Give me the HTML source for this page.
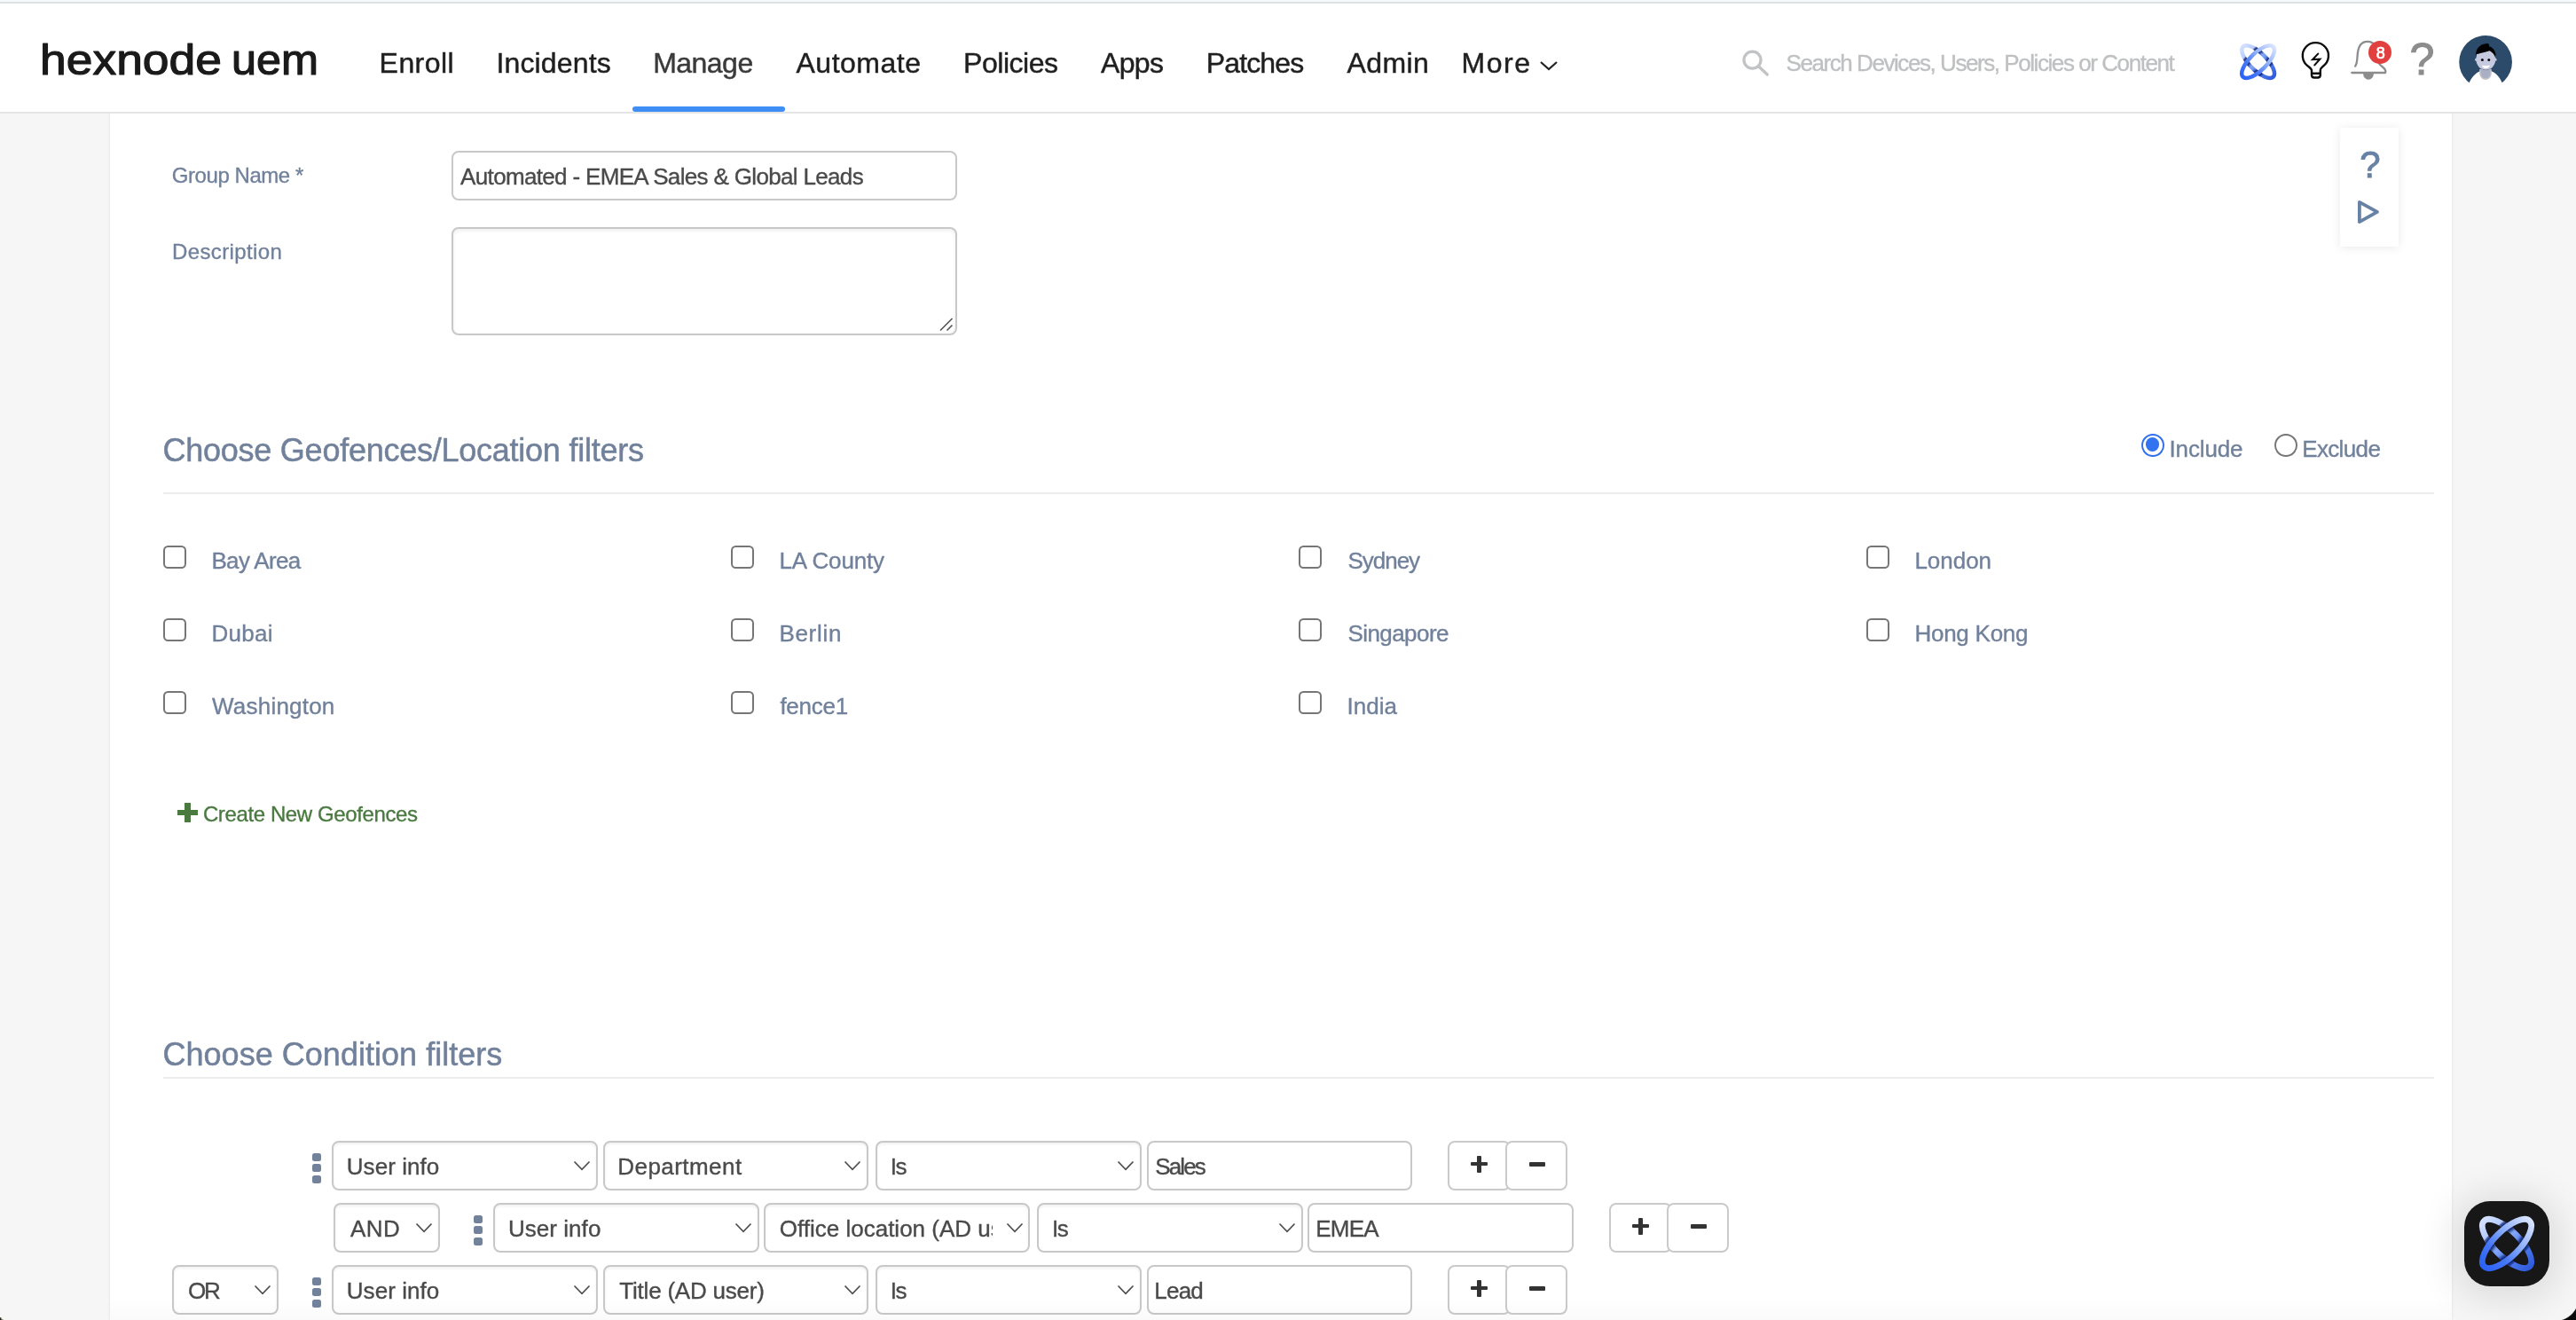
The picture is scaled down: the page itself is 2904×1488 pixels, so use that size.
<!DOCTYPE html><html lang="en"><head><meta charset="utf-8"><title>Hexnode UEM - Dynamic Group</title><style>
*{box-sizing:border-box;margin:0;padding:0}
html,body{width:2904px;height:1488px;overflow:hidden;background:#f6f6f6;font-family:"Liberation Sans",sans-serif}
body{position:relative;opacity:.9999}
div,span,header,nav,section,a,label,h2,button,svg,hr,main,aside{position:absolute;display:block}
.t{white-space:nowrap;line-height:1;font-weight:400;text-decoration:none;-webkit-text-stroke:0.014em}
.fld{background:#fff;border:2px solid #c8c8c8;border-radius:8px}
.sel{background:#fff;border:2px solid #c8c8c8;border-radius:8px;box-shadow:inset 0 2px 3px rgba(0,0,0,.06)}
.btn{background:transparent;border:2px solid #cacaca;border-radius:8px}
.cb{background:#fff;border:2px solid #767676;border-radius:5.5px}
.hr{background:#ececed;height:2px}
@media (max-width:1600px){html{zoom:.5}}
</style></head><body>
<div style="left:0px;top:0px;width:2904px;height:2px;background:#f5f9fa"></div>
<div style="left:0px;top:2px;width:2904px;height:2px;background:#dce1e4"></div>
<header style="left:0;top:4px;width:2904px;height:124px;background:#fff;border-bottom:2px solid #e5e5e5;z-index:2">
<svg style="left:40px;top:30px" width="330" height="64" viewBox="0 0 330 64"><text y="50.200" font-family="Liberation Sans, sans-serif" font-weight="400" font-size="49" fill="#1a1a1a" stroke="#1a1a1a" stroke-width="1.200" stroke-linejoin="round" stroke-linecap="round"><tspan x="5" textLength="205" lengthAdjust="spacingAndGlyphs">hexnode</tspan><tspan> </tspan><tspan x="221" textLength="98" lengthAdjust="spacingAndGlyphs">uem</tspan></text></svg>
<nav style="left:0;top:0;width:1800px;height:122px">
<a class="t" style="left:427.60px;top:50.51px;font-size:32px;color:#1f1f1f;letter-spacing:0.439px;">Enroll</a>
<a class="t" style="left:559.40px;top:50.51px;font-size:32px;color:#1f1f1f;letter-spacing:0.153px;">Incidents</a>
<a class="t" style="left:736.20px;top:50.51px;font-size:32px;color:#3a3a3a;letter-spacing:-0.529px;">Manage</a>
<a class="t" style="left:897.50px;top:50.51px;font-size:32px;color:#1f1f1f;letter-spacing:0.504px;">Automate</a>
<a class="t" style="left:1086.00px;top:50.51px;font-size:32px;color:#1f1f1f;letter-spacing:-0.452px;">Policies</a>
<a class="t" style="left:1241.00px;top:50.51px;font-size:32px;color:#1f1f1f;letter-spacing:-0.646px;">Apps</a>
<a class="t" style="left:1359.70px;top:50.51px;font-size:32px;color:#1f1f1f;letter-spacing:-0.838px;">Patches</a>
<a class="t" style="left:1518.50px;top:50.51px;font-size:32px;color:#1f1f1f;letter-spacing:0.373px;">Admin</a>
<a class="t" style="left:1647.60px;top:50.51px;font-size:32px;color:#1f1f1f;letter-spacing:1.497px;">More</a>
<svg style="left:1734px;top:63px" width="24" height="14" viewBox="0 0 24 14"><polyline points="3,3 12,11 21,3" fill="none" stroke="#222" stroke-width="2.2"/></svg>
<div style="left:713px;top:116px;width:172px;height:6px;background:#3f8ef5;border-radius:3px"></div>
</nav>
<svg style="left:1962px;top:50px" width="36" height="36" viewBox="0 0 36 36"><circle cx="13.5" cy="13.6" r="9.500" fill="none" stroke="#c2c3c4" stroke-width="3.300"/><line x1="20.500" y1="20.800" x2="30.300" y2="30" stroke="#c2c3c4" stroke-width="3.300" stroke-linecap="round"/></svg>
<span class="t" style="left:2013.50px;top:54.39px;font-size:26px;color:#bfc0c2;letter-spacing:-1.436px;">Search Devices, Users, Policies or Content</span>
<svg style="left:2523.29px;top:43.19px" width="45.22" height="45.22" viewBox="-34 -34 68 68">
<defs><linearGradient id="haa" gradientUnits="userSpaceOnUse" x1="-38" y1="0" x2="38" y2="0"><stop offset="0" stop-color="#2b62f5"/><stop offset=".3" stop-color="#4577f6"/><stop offset=".62" stop-color="#8fb0fa"/><stop offset="1" stop-color="#d9e4ff"/></linearGradient>
<linearGradient id="hab" gradientUnits="userSpaceOnUse" x1="-38" y1="0" x2="38" y2="0"><stop offset="0" stop-color="#d3e0ff"/><stop offset=".32" stop-color="#a9c2fc"/><stop offset=".6" stop-color="#5f8af1"/><stop offset="1" stop-color="#2f5bdc"/></linearGradient>
<filter id="haf" x="-20%" y="-20%" width="140%" height="140%"><feGaussianBlur stdDeviation="1.6"/></filter>
<mask id="ham" maskUnits="userSpaceOnUse" x="-34" y="-34" width="68" height="68"><ellipse rx="36.3" ry="14.5" transform="rotate(45)" fill="none" stroke="#fff" stroke-width="6.8"/></mask></defs>
<ellipse rx="36.3" ry="14.5" transform="rotate(45)" fill="none" stroke="url(#hab)" stroke-width="6.8"/>
<g mask="url(#ham)"><ellipse rx="36.3" ry="14.5" transform="rotate(-45)" fill="none" stroke="#0c2273" stroke-opacity=".95" stroke-width="13.5" filter="url(#haf)"/></g>
<ellipse rx="36.3" ry="14.5" transform="rotate(-45)" fill="none" stroke="url(#haa)" stroke-width="6.8"/>
</svg>
<svg style="left:2590px;top:39px" width="42" height="50" viewBox="0 0 42 50"><path d="M16 40 V36.500 C16 34.500 13.500 33 12 31.700 A14.600 14.600 0 1 1 28.800 31.700 C27.300 33 25.800 34.500 25.800 36.500 V40 M16 39.700 H25.800 M16 39.500 V41.500 Q16 44.500 19 44.500 H22.800 Q25.800 44.500 25.800 41.500 V39.500" fill="none" stroke="#0d0d0d" stroke-width="2.400" stroke-linejoin="round"/><polyline points="23.200,17.600 17.100,24.100 25.300,23.600 19.300,30.400" fill="none" stroke="#0d0d0d" stroke-width="2.100" stroke-linejoin="miter" stroke-linecap="round"/></svg>
<svg style="left:2648px;top:40px" width="46" height="48" viewBox="0 0 46 48"><path d="M3.300 38 L41 38 C41.900 36 41 34.500 39.500 32.800 C37 30.500 35.200 29.500 34.300 28 C34 26 34 24 34 22 C34 10 29 2.900 21 2.900 C13.500 2.900 10 9.500 9.600 19 C9.300 25 8.700 28.500 7.200 30.500" fill="none" stroke="#8c8c8c" stroke-width="2.300" stroke-linecap="round" stroke-linejoin="round"/><path d="M16.100 39 A5.900 6.800 0 0 0 27.900 39 Z" fill="#8c8c8c"/></svg>
<div style="left:2670px;top:42px;width:26px;height:26px;background:#e2403f;border-radius:50%"></div>
<span class="t" style="left:2678.70px;top:46.66px;font-size:18px;color:#fff;-webkit-text-stroke:0.7px #fff;">8</span>
<span class="t" style="left:2716.60px;top:37.67px;font-size:50px;color:#8c8c8c;-webkit-text-stroke:1.1px #8c8c8c;">?</span>
<svg style="left:2772px;top:35.700px" width="60" height="62" viewBox="0 0 60 62"><circle cx="30.100" cy="29.900" r="29.850" fill="#2c4a6a"/><path d="M11.600 53.300 C14.500 46.500 19.500 41.500 24.500 40 L36 40 C41 41.500 46 46.500 48.600 53.300 L54 62 L6 62 L11.600 53.300 Z" fill="#fff"/><path d="M23.200 38 L36.800 38 L36.800 42.500 C36.800 47 33.500 50 30 50 C26.500 50 23.200 47 23.200 42.500 Z" fill="#c6c6c8"/><path d="M24.700 38 L35.300 38 L35.300 42.500 C35.300 46 32.800 48.300 30 48.300 C27.200 48.300 24.700 46 24.700 42.500 Z" fill="#a9afc4"/><ellipse cx="30.300" cy="25.600" rx="11.200" ry="13.700" fill="#c6cade"/><circle cx="19.500" cy="27.300" r="1.500" fill="#c6cade"/><circle cx="41.100" cy="27.300" r="1.500" fill="#c6cade"/><path d="M24.500 37.300 Q30.300 41 36 37.300 Q30.300 39.600 24.500 37.300 Z" fill="#3b3f4e" opacity=".55"/><path d="M19.200 26 C18.500 19 20 14.500 23.500 12 C26.500 9.800 29.500 9.200 32.300 9.100 C33.800 9.100 34 10.800 34.200 12.300 C38 13.500 41 17 41.500 21.500 L41.300 25.800 C40.600 23 39.500 20.500 34.800 17.300 C30 18.800 25 20 19.900 21 Z" fill="#000"/><circle cx="26.400" cy="27.500" r="1.500" fill="#0a0a12"/><circle cx="33.800" cy="27.500" r="1.500" fill="#0a0a12"/><path d="M26 33.500 Q30.400 35 34.900 33.500 Q33.500 37.300 30.400 37.300 Q27.300 37.300 26 33.500 Z" fill="#fff"/></svg>
</header>
<main style="left:124px;top:128px;width:2640px;height:1360px;background:#fff;box-shadow:0 0 3px rgba(0,0,0,.10)">
<div style="left:2514px;top:16px;width:66px;height:134px;background:#fff;box-shadow:0 1px 10px rgba(0,0,0,.09)"></div>
<span class="t" style="left:2536.20px;top:37.25px;font-size:42px;color:#6782a5;-webkit-text-stroke:0.9px #6782a5;">?</span>
<svg style="left:2530px;top:93px" width="34" height="36" viewBox="0 0 34 36"><path d="M5.900 6.800 L25.900 17.950 L5.900 29.100 Z" fill="none" stroke="#6782a5" stroke-width="3.800" stroke-linejoin="round"/></svg>
<label class="t" style="left:69.80px;top:57.88px;font-size:24px;color:#71819b;letter-spacing:-0.442px;">Group Name *</label>
<div class="fld" style="left:385px;top:42px;width:570px;height:56px;"></div>
<span class="t" style="left:395.10px;top:57.79px;font-size:26px;color:#4a4a4a;letter-spacing:-0.661px;">Automated - EMEA Sales &amp; Global Leads</span>
<label class="t" style="left:70.00px;top:143.78px;font-size:24px;color:#71819b;letter-spacing:0.380px;">Description</label>
<div class="fld" style="left:385px;top:128px;width:570px;height:122px;box-shadow:inset 0 2px 4px rgba(0,0,0,.07)"><svg style="right:2px;bottom:2px" width="18" height="18" viewBox="0 0 18 18"><path d="M3 16.500 L16.500 3 M10.500 16.500 L16.500 10.500" stroke="#555" stroke-width="1.6" fill="none"/></svg></div>
<h2 class="t" style="left:59.50px;top:361.93px;font-size:36px;color:#71819b;letter-spacing:-0.247px;">Choose Geofences/Location filters</h2>
<div class="hr" style="left:60px;top:427px;width:2560px;height:2px;"></div>
<div style="left:2290px;top:360.5px;width:26px;height:26px;border:2.5px solid #2f6ff0;border-radius:50%;background:#fff"><div style="left:2.75px;top:2.75px;width:15.5px;height:15.5px;border-radius:50%;background:#3273f2"></div></div>
<label class="t" style="left:2321.50px;top:364.99px;font-size:26px;color:#71819b;letter-spacing:-0.130px;">Include</label>
<div style="left:2440px;top:360.5px;width:26px;height:26px;border:2.2px solid #767676;border-radius:50%;background:#fff"></div>
<label class="t" style="left:2471.20px;top:364.99px;font-size:26px;color:#71819b;letter-spacing:-0.640px;">Exclude</label>
<div class="cb" style="left:60px;top:487px;width:26px;height:26px;"></div>
<label class="t" style="left:114.40px;top:490.59px;font-size:26px;color:#71819b;letter-spacing:-0.655px;">Bay Area</label>
<div class="cb" style="left:700px;top:487px;width:26px;height:26px;"></div>
<label class="t" style="left:754.40px;top:490.59px;font-size:26px;color:#71819b;letter-spacing:-0.163px;">LA County</label>
<div class="cb" style="left:1340px;top:487px;width:26px;height:26px;"></div>
<label class="t" style="left:1395.40px;top:490.59px;font-size:26px;color:#71819b;letter-spacing:-1.004px;">Sydney</label>
<div class="cb" style="left:1980px;top:487px;width:26px;height:26px;"></div>
<label class="t" style="left:2034.40px;top:490.59px;font-size:26px;color:#71819b;letter-spacing:-0.020px;">London</label>
<div class="cb" style="left:60px;top:569px;width:26px;height:26px;"></div>
<label class="t" style="left:114.40px;top:572.69px;font-size:26px;color:#71819b;letter-spacing:0.286px;">Dubai</label>
<div class="cb" style="left:700px;top:569px;width:26px;height:26px;"></div>
<label class="t" style="left:754.40px;top:572.69px;font-size:26px;color:#71819b;letter-spacing:0.697px;">Berlin</label>
<div class="cb" style="left:1340px;top:569px;width:26px;height:26px;"></div>
<label class="t" style="left:1395.40px;top:572.69px;font-size:26px;color:#71819b;letter-spacing:-0.560px;">Singapore</label>
<div class="cb" style="left:1980px;top:569px;width:26px;height:26px;"></div>
<label class="t" style="left:2034.40px;top:572.69px;font-size:26px;color:#71819b;letter-spacing:-0.243px;">Hong Kong</label>
<div class="cb" style="left:60px;top:651px;width:26px;height:26px;"></div>
<label class="t" style="left:115.10px;top:654.59px;font-size:26px;color:#71819b;letter-spacing:0.203px;">Washington</label>
<div class="cb" style="left:700px;top:651px;width:26px;height:26px;"></div>
<label class="t" style="left:755.40px;top:654.59px;font-size:26px;color:#71819b;letter-spacing:-0.241px;">fence1</label>
<div class="cb" style="left:1340px;top:651px;width:26px;height:26px;"></div>
<label class="t" style="left:1394.40px;top:654.59px;font-size:26px;color:#71819b;letter-spacing:0.045px;">India</label>
<div style="left:76.19999999999999px;top:784.6px;width:22.6px;height:6.4px;background:#4a7a40"></div>
<div style="left:84.1px;top:777.1px;width:6.6px;height:21.6px;background:#4a7a40"></div>
<a class="t" style="left:104.90px;top:778.08px;font-size:24px;color:#4a7a40;letter-spacing:-0.382px;">Create New Geofences</a>
<h2 class="t" style="left:59.50px;top:1042.53px;font-size:36px;color:#71819b;letter-spacing:0.026px;">Choose Condition filters</h2>
<div class="hr" style="left:60px;top:1086px;width:2560px;height:2px;"></div>
<div style="left:227.5px;top:1171.6px;width:10px;height:9px;background:#72829b;border-radius:2.5px"></div><div style="left:227.5px;top:1184.1999999999998px;width:10px;height:9px;background:#72829b;border-radius:2.5px"></div><div style="left:227.5px;top:1196.8px;width:10px;height:9px;background:#72829b;border-radius:2.5px"></div>
<div class="sel" style="left:250.2px;top:1158px;width:299.8px;height:56px;"><span class="t" style="left:14.60px;top:13.99px;font-size:26px;color:#4a4a4a;letter-spacing:0.053px;">User info</span><svg style="right:5.5px;top:20.3px" width="20" height="13" viewBox="0 0 20 13"><polyline points="1.500,1.500 10,10.300 18.500,1.500" fill="none" stroke="#4d4d4d" stroke-width="1.7"/></svg></div>
<div class="sel" style="left:555.7px;top:1158px;width:299px;height:56px;"><span class="t" style="left:14.60px;top:13.99px;font-size:26px;color:#4a4a4a;letter-spacing:0.443px;">Department</span><svg style="right:5.5px;top:20.3px" width="20" height="13" viewBox="0 0 20 13"><polyline points="1.500,1.500 10,10.300 18.500,1.500" fill="none" stroke="#4d4d4d" stroke-width="1.7"/></svg></div>
<div class="sel" style="left:863.2px;top:1158px;width:299.8px;height:56px;"><span class="t" style="left:14.60px;top:13.99px;font-size:26px;color:#4a4a4a;letter-spacing:-1.424px;">Is</span><svg style="right:5.5px;top:20.3px" width="20" height="13" viewBox="0 0 20 13"><polyline points="1.500,1.500 10,10.300 18.500,1.500" fill="none" stroke="#4d4d4d" stroke-width="1.7"/></svg></div>
<div class="fld" style="left:1168.5px;top:1158px;width:299.5px;height:56px;"><span class="t" style="left:7.80px;top:13.99px;font-size:26px;color:#4a4a4a;letter-spacing:-1.885px;">Sales</span></div>
<div class="btn" style="left:1508px;top:1158px;width:71px;height:56px;"><div style="left:24.3px;top:22.3px;width:18.4px;height:4.2px;background:#333;border-radius:1px"></div><div style="left:31.4px;top:15.2px;width:4.2px;height:18.4px;background:#333;border-radius:1px"></div></div><div class="btn" style="left:1573px;top:1158px;width:70px;height:56px;background:#fff;"><div style="left:24.5px;top:22px;width:18.5px;height:4.6px;background:#333;border-radius:1px"></div></div>
<div class="sel" style="left:252.39999999999998px;top:1228px;width:119.2px;height:56px;"><span class="t" style="left:16.60px;top:13.99px;font-size:26px;color:#4a4a4a;letter-spacing:0.441px;">AND</span><svg style="right:5.5px;top:20.3px" width="20" height="13" viewBox="0 0 20 13"><polyline points="1.500,1.500 10,10.300 18.500,1.500" fill="none" stroke="#4d4d4d" stroke-width="1.7"/></svg></div>
<div style="left:409.6px;top:1241.6px;width:10px;height:9px;background:#72829b;border-radius:2.5px"></div><div style="left:409.6px;top:1254.1999999999998px;width:10px;height:9px;background:#72829b;border-radius:2.5px"></div><div style="left:409.6px;top:1266.8px;width:10px;height:9px;background:#72829b;border-radius:2.5px"></div>
<div class="sel" style="left:432.29999999999995px;top:1228px;width:299.7px;height:56px;"><span class="t" style="left:14.60px;top:13.99px;font-size:26px;color:#4a4a4a;letter-spacing:0.053px;">User info</span><svg style="right:5.5px;top:20.3px" width="20" height="13" viewBox="0 0 20 13"><polyline points="1.500,1.500 10,10.300 18.500,1.500" fill="none" stroke="#4d4d4d" stroke-width="1.7"/></svg></div>
<div class="sel" style="left:737.2px;top:1228px;width:300px;height:56px;"><div style="left:0;top:0;width:256px;height:52px;overflow:hidden"><span class="t" style="left:15.60px;top:13.99px;font-size:26px;color:#4a4a4a;">Office location (AD user)</span></div><svg style="right:5.5px;top:20.3px" width="20" height="13" viewBox="0 0 20 13"><polyline points="1.500,1.500 10,10.300 18.500,1.500" fill="none" stroke="#4d4d4d" stroke-width="1.7"/></svg></div>
<div class="sel" style="left:1045.3px;top:1228px;width:299.7px;height:56px;"><span class="t" style="left:14.60px;top:13.99px;font-size:26px;color:#4a4a4a;letter-spacing:-1.424px;">Is</span><svg style="right:5.5px;top:20.3px" width="20" height="13" viewBox="0 0 20 13"><polyline points="1.500,1.500 10,10.300 18.500,1.500" fill="none" stroke="#4d4d4d" stroke-width="1.7"/></svg></div>
<div class="fld" style="left:1350.4px;top:1228px;width:299.5px;height:56px;"><span class="t" style="left:6.80px;top:13.99px;font-size:26px;color:#4a4a4a;letter-spacing:-0.781px;">EMEA</span></div>
<div class="btn" style="left:1690px;top:1228px;width:71px;height:56px;"><div style="left:24.3px;top:22.3px;width:18.4px;height:4.2px;background:#333;border-radius:1px"></div><div style="left:31.4px;top:15.2px;width:4.2px;height:18.4px;background:#333;border-radius:1px"></div></div><div class="btn" style="left:1755px;top:1228px;width:70px;height:56px;background:#fff;"><div style="left:24.5px;top:22px;width:18.5px;height:4.6px;background:#333;border-radius:1px"></div></div>
<div class="sel" style="left:70.30000000000001px;top:1298px;width:119.7px;height:56px;"><span class="t" style="left:15.60px;top:13.99px;font-size:26px;color:#4a4a4a;letter-spacing:-2.224px;">OR</span><svg style="right:5.5px;top:20.3px" width="20" height="13" viewBox="0 0 20 13"><polyline points="1.500,1.500 10,10.300 18.500,1.500" fill="none" stroke="#4d4d4d" stroke-width="1.7"/></svg></div>
<div style="left:227.5px;top:1311.6px;width:10px;height:9px;background:#72829b;border-radius:2.5px"></div><div style="left:227.5px;top:1324.1999999999998px;width:10px;height:9px;background:#72829b;border-radius:2.5px"></div><div style="left:227.5px;top:1336.8px;width:10px;height:9px;background:#72829b;border-radius:2.5px"></div>
<div class="sel" style="left:250.2px;top:1298px;width:299.8px;height:56px;"><span class="t" style="left:14.60px;top:13.99px;font-size:26px;color:#4a4a4a;letter-spacing:0.053px;">User info</span><svg style="right:5.5px;top:20.3px" width="20" height="13" viewBox="0 0 20 13"><polyline points="1.500,1.500 10,10.300 18.500,1.500" fill="none" stroke="#4d4d4d" stroke-width="1.7"/></svg></div>
<div class="sel" style="left:555.7px;top:1298px;width:299px;height:56px;"><span class="t" style="left:16.60px;top:13.99px;font-size:26px;color:#4a4a4a;letter-spacing:-0.211px;">Title (AD user)</span><svg style="right:5.5px;top:20.3px" width="20" height="13" viewBox="0 0 20 13"><polyline points="1.500,1.500 10,10.300 18.500,1.500" fill="none" stroke="#4d4d4d" stroke-width="1.7"/></svg></div>
<div class="sel" style="left:863.2px;top:1298px;width:299.8px;height:56px;"><span class="t" style="left:14.60px;top:13.99px;font-size:26px;color:#4a4a4a;letter-spacing:-1.424px;">Is</span><svg style="right:5.5px;top:20.3px" width="20" height="13" viewBox="0 0 20 13"><polyline points="1.500,1.500 10,10.300 18.500,1.500" fill="none" stroke="#4d4d4d" stroke-width="1.7"/></svg></div>
<div class="fld" style="left:1168.5px;top:1298px;width:299.5px;height:56px;"><span class="t" style="left:6.80px;top:13.99px;font-size:26px;color:#4a4a4a;letter-spacing:-0.793px;">Lead</span></div>
<div class="btn" style="left:1508px;top:1298px;width:71px;height:56px;"><div style="left:24.3px;top:22.3px;width:18.4px;height:4.2px;background:#333;border-radius:1px"></div><div style="left:31.4px;top:15.2px;width:4.2px;height:18.4px;background:#333;border-radius:1px"></div></div><div class="btn" style="left:1573px;top:1298px;width:70px;height:56px;background:#fff;"><div style="left:24.5px;top:22px;width:18.5px;height:4.6px;background:#333;border-radius:1px"></div></div>
</main>
<div style="left:2778px;top:1354px;width:96px;height:96px;background:#171717;border-radius:29px;box-shadow:0 4px 40px 12px rgba(0,0,0,.10)"><svg style="left:13.80px;top:13.80px" width="68.00" height="68.00" viewBox="-34 -34 68 68">
<defs><linearGradient id="faa" gradientUnits="userSpaceOnUse" x1="-38" y1="0" x2="38" y2="0"><stop offset="0" stop-color="#2b62f5"/><stop offset=".3" stop-color="#4577f6"/><stop offset=".62" stop-color="#8fb0fa"/><stop offset="1" stop-color="#d9e4ff"/></linearGradient>
<linearGradient id="fab" gradientUnits="userSpaceOnUse" x1="-38" y1="0" x2="38" y2="0"><stop offset="0" stop-color="#d3e0ff"/><stop offset=".32" stop-color="#a9c2fc"/><stop offset=".6" stop-color="#5f8af1"/><stop offset="1" stop-color="#2f5bdc"/></linearGradient>
<filter id="faf" x="-20%" y="-20%" width="140%" height="140%"><feGaussianBlur stdDeviation="1.6"/></filter>
<mask id="fam" maskUnits="userSpaceOnUse" x="-34" y="-34" width="68" height="68"><ellipse rx="36.3" ry="14.5" transform="rotate(45)" fill="none" stroke="#fff" stroke-width="6.8"/></mask></defs>
<ellipse rx="36.3" ry="14.5" transform="rotate(45)" fill="none" stroke="url(#fab)" stroke-width="6.8"/>
<g mask="url(#fam)"><ellipse rx="36.3" ry="14.5" transform="rotate(-45)" fill="none" stroke="#0c2273" stroke-opacity=".95" stroke-width="13.5" filter="url(#faf)"/></g>
<ellipse rx="36.3" ry="14.5" transform="rotate(-45)" fill="none" stroke="url(#faa)" stroke-width="6.8"/>
</svg></div>
<div style="left:124px;top:1464px;width:2640px;height:24px;background:linear-gradient(to bottom,rgba(0,0,0,0),rgba(0,0,0,.018))"></div>
<div style="left:2878px;top:1460px;width:26px;height:28px;background:radial-gradient(circle at 2.5px 2.5px,rgba(0,0,0,0) 26px,#0a0a0a 27.200px)"></div>
<div style="left:0px;top:1485px;width:4px;height:3px;background:radial-gradient(circle at 100% 0,rgba(0,0,0,0) 2px,#1a2410 4px)"></div>
</body></html>
